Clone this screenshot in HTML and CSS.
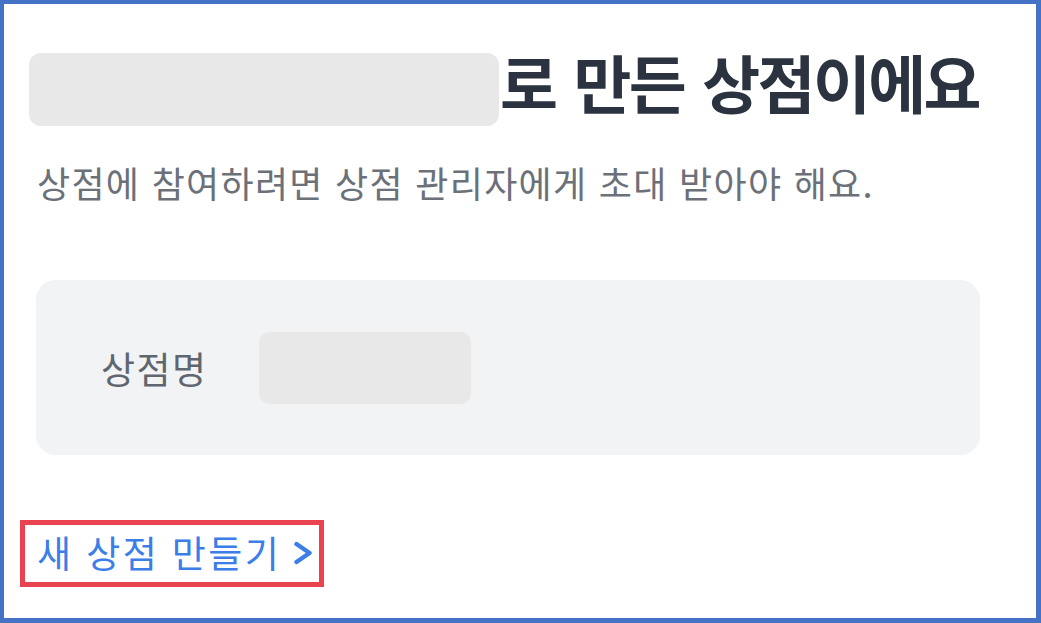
FILE: index.html
```html
<!DOCTYPE html>
<html lang="ko">
<head>
<meta charset="utf-8">
<link rel="stylesheet" href="styles.css">
</head>
<body>
<div class="frame">
  <h1 class="title"><span class="blank blank-name"></span><span class="title-text">로 만든 상점이에요</span></h1>
  <p class="desc">상점에 참여하려면 상점 관리자에게 초대 받아야 해요.</p>
  <div class="card">
    <span class="label">상점명</span>
    <span class="blank blank-store"></span>
  </div>
  <div class="link-wrap">
    <a class="link" href="#">새 상점 만들기<svg class="chev" viewBox="0 0 20 24" width="20" height="24"><path d="M3.5 3 L16.5 12 L3.5 21" fill="none" stroke="currentColor" stroke-width="4.4" stroke-linecap="round" stroke-linejoin="round"/></svg></a>
  </div>
</div>
</body>
</html>
```
FILE: styles.css
```css
* { box-sizing: border-box; }
html, body { margin: 0; padding: 0; background: #fff; }
body { font-family: "Noto Sans CJK KR", "Noto Sans", sans-serif; }
.frame {
  width: 1041px;
  height: 623px;
  border: 4px solid #4472c4;
  border-right-width: 5px;
  border-bottom-width: 5px;
  padding: 49px 0 0 25px;
  overflow: hidden;
}
.title {
  display: flex;
  align-items: center;
  margin: 0;
  height: 73px;
  font-size: 63px;
  font-weight: 700;
  color: #2b3340;
  letter-spacing: -2.6px;
  word-spacing: 3px;
}
.blank {
  display: block;
  background: #e8e8e8;
  flex: none;
}
.blank-name {
  width: 470px;
  height: 73px;
  border-radius: 12px;
  margin-right: 1px;
}
.title-text { line-height: 1; margin-bottom: 18px; }
.desc {
  margin: 32px 0 0 8px;
  font-size: 36px;
  line-height: 48px;
  color: #6b7079;
  letter-spacing: 1.3px;
}
.card {
  display: flex;
  align-items: center;
  margin: 74px 0 0 7px;
  width: 944px;
  height: 175px;
  background: #f2f3f5;
  border-radius: 20px;
  padding-left: 65px;
}
.label {
  font-size: 37px;
  color: #5f6670;
  letter-spacing: 1.5px;
  width: 158px;
}
.blank-store {
  width: 212px;
  height: 72px;
  border-radius: 10px;
}
.link-wrap {
  margin: 65px 0 0 -9px;
  display: inline-block;
  border: 5px solid #e8434f;
  padding: 3px 6px 6px 12px;
}
.link {
  display: flex;
  align-items: center;
  gap: 12px;
  font-size: 37px;
  line-height: 48px;
  color: #3b7ee8;
  text-decoration: none;
  letter-spacing: 2.4px;
}
.chev { width: 20px; height: 24px; margin-top: 2px; }
```
